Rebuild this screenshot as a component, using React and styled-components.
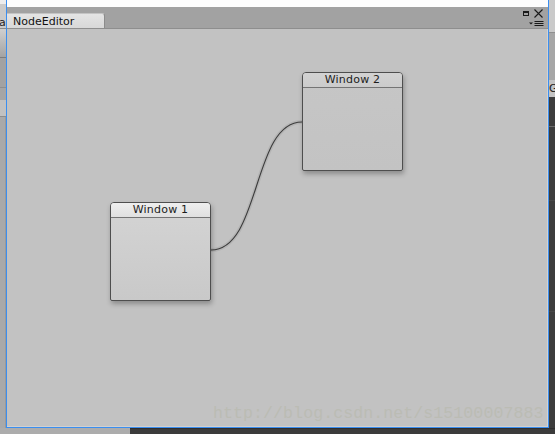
import React from "react";
import styled, { createGlobalStyle } from "styled-components";

const GlobalStyle = createGlobalStyle`
  html, body {
    margin: 0;
    padding: 0;
    background: #3b3b3b;
  }
  #root {
    width: 555px;
    height: 434px;
  }
`;

const Screen = styled.div`
  width: 555px;
  height: 434px;
  display: flex;
  flex-direction: column;
  overflow: hidden;
  font-family: "DejaVu Sans", "Liberation Sans", sans-serif;
`;

const MainRow = styled.div`
  display: flex;
  height: 428px;
`;

const SideStrip = styled.div`
  width: 6px;
  flex-shrink: 0;
  display: flex;
  flex-direction: column;
  overflow: hidden;
`;

const StripBlock = styled.div`
  height: ${(p) => (p.$h ? p.$h + "px" : "auto")};
  flex: ${(p) => (p.$h ? "none" : 1)};
  background: ${(p) => p.$bg};
  box-sizing: border-box;
  border-bottom: ${(p) => (p.$line ? `1px solid ${p.$line}` : "none")};
  box-shadow: ${(p) => p.$inset || "none"};
  font-size: 11px;
  line-height: ${(p) => p.$lh || 11}px;
  padding-top: ${(p) => p.$pt || 0}px;
  text-indent: ${(p) => p.$indent || 0}px;
  color: #1e1e1e;
  white-space: nowrap;
  overflow: hidden;
`;

const EditorWindow = styled.div`
  width: 543px;
  flex-shrink: 0;
  box-sizing: border-box;
  display: flex;
  flex-direction: column;
  border-left: 1px solid #3a8ef0;
  border-right: 1px solid #3a8ef0;
  border-bottom: 1px solid #3a8ef0;
`;

const TopBand = styled.div`
  height: 7px;
  background: #fdfdfd;
`;

const TitleBar = styled.div`
  height: 21px;
  background: #a2a2a2;
  display: flex;
  justify-content: space-between;
  align-items: flex-end;
`;

const Tab = styled.div`
  width: 98px;
  height: 15px;
  box-sizing: border-box;
  padding-left: 6px;
  background: linear-gradient(#e4e4e4, #d8d8d8);
  border-right: 1px solid #8c8c8c;
  border-top: 1px solid #c4c4c4;
  border-radius: 0 3px 0 0;
  font-size: 11px;
  line-height: 15px;
  color: #111;
`;

const Controls = styled.div`
  align-self: stretch;
  display: flex;
  flex-direction: column;
  align-items: flex-end;
  padding: 2px 5px 0 0;
`;

const ControlRow = styled.div`
  display: flex;
  align-items: center;
  gap: ${(p) => p.$gap}px;
  height: ${(p) => p.$h}px;
  margin-top: ${(p) => p.$mt || 0}px;
  margin-right: ${(p) => p.$mr || 0}px;
`;

const Canvas = styled.div`
  flex: 1;
  position: relative;
  background: #c2c2c2;
  border-top: 1px solid #8e8e8e;
  box-shadow: inset -1px 0 #d2d2d2, inset 0 -1px #d0d0d0;
`;

const CurveLayer = styled.svg`
  position: absolute;
  left: 0;
  top: 0;
  width: 100%;
  height: 100%;
`;

const NodeWindow = styled.div`
  position: absolute;
  left: ${(p) => p.$x}px;
  top: ${(p) => p.$y}px;
  width: 101px;
  height: 99px;
  box-sizing: border-box;
  display: flex;
  flex-direction: column;
  border: 1px solid #4e4e4e;
  border-radius: 4px 4px 2px 2px;
  box-shadow: 1px 3px 5px rgba(0, 0, 0, 0.28);
  background: ${(p) =>
    p.$active
      ? "linear-gradient(#d4d4d4, #c9c9c9)"
      : "linear-gradient(#c6c6c6, #c3c3c3)"};
`;

const NodeHeader = styled.div`
  height: 14px;
  border-bottom: 1px solid #747474;
  border-radius: 3px 3px 0 0;
  background: ${(p) =>
    p.$active
      ? "linear-gradient(#eeeeee, #e0e0e0)"
      : "linear-gradient(#d2d2d2, #cbcbcb)"};
  text-align: center;
  font-size: 11px;
  line-height: 14px;
  letter-spacing: 0.2px;
  color: #1c1c1c;
`;

const Watermark = styled.div`
  position: absolute;
  left: 206px;
  top: 377px;
  font-family: "Liberation Mono", monospace;
  font-size: 16.7px;
  line-height: 1;
  color: #bbbcb4;
  white-space: nowrap;
`;

const BottomStrip = styled.div`
  height: 6px;
  display: flex;
`;

const BottomPart = styled.div`
  width: ${(p) => (p.$w ? p.$w + "px" : "auto")};
  flex: ${(p) => (p.$w ? "none" : 1)};
  background: ${(p) => p.$bg};
  box-shadow: ${(p) => p.$inset || "none"};
`;

function MaximizeIcon() {
  return (
    <svg width="6" height="5" viewBox="0 0 6 5">
      <rect x="0.5" y="0.5" width="5" height="4" fill="none" stroke="#1a1a1a" />
      <rect x="0" y="0" width="6" height="2" fill="#1a1a1a" />
    </svg>
  );
}

function CloseIcon() {
  return (
    <svg width="9" height="9" viewBox="0 0 9 9">
      <path d="M0.5 0.5 L8.5 8.5 M8.5 0.5 L0.5 8.5" stroke="#1a1a1a" strokeWidth="1.1" />
    </svg>
  );
}

function MenuIcon() {
  return (
    <svg width="15" height="6" viewBox="0 0 15 6">
      <path d="M0 1.5 H4 L2 3.5 Z" fill="#1a1a1a" />
      <path d="M5.5 0.5 H14.5 M5.5 2.5 H14.5 M5.5 4.5 H14.5" stroke="#1a1a1a" strokeWidth="1" />
    </svg>
  );
}

const nodes = [
  { id: 1, title: "Window 1", x: 103, y: 173, active: true },
  { id: 2, title: "Window 2", x: 295, y: 43, active: false },
];

export default function App() {
  // curve runs from the right edge of Window 1 to the left edge of Window 2
  const start = { x: 204, y: 221 };
  const end = { x: 295, y: 93 };
  const d = `M${start.x} ${start.y} C${start.x + 50} ${start.y}, ${end.x - 50} ${end.y}, ${end.x} ${end.y}`;

  return (
    <>
      <GlobalStyle />
      <Screen>
        <MainRow>
          <SideStrip>
            <StripBlock $h={4} $bg="#ededed" />
            <StripBlock $h={24} $bg="#cacaca" $pt={13} $indent={-1}>
              a
            </StripBlock>
            <StripBlock $h={1} $bg="#8a8a8a" />
            <StripBlock $h={29} $bg="linear-gradient(#cfcfcf, #a3a3a3)" $line="#7c7c7c" />
            <StripBlock $h={30} $bg="#a2a2a2" $line="#8e8e8e" />
            <StripBlock $h={12} $bg="#a5a5a5" />
            <StripBlock $h={17} $bg="#c1c1c1" $line="#8c8c8c" />
            <StripBlock $bg="#a9a9a9" $inset="inset -1px 0 #9a9a9a" />
          </SideStrip>

          <EditorWindow>
            <TopBand />
            <TitleBar>
              <Tab>NodeEditor</Tab>
              <Controls>
                <ControlRow $gap={5} $h={9}>
                  <MaximizeIcon />
                  <CloseIcon />
                </ControlRow>
                <ControlRow $gap={0} $h={6} $mt={3} $mr={-1}>
                  <MenuIcon />
                </ControlRow>
              </Controls>
            </TitleBar>
            <Canvas>
              <CurveLayer>
                <path d={d} fill="none" stroke="rgba(0,0,0,0.07)" strokeWidth="4" />
                <path d={d} fill="none" stroke="#3c3c3c" strokeWidth="1.1" />
              </CurveLayer>
              {nodes.map((n) => (
                <NodeWindow key={n.id} $x={n.x} $y={n.y} $active={n.active}>
                  <NodeHeader $active={n.active}>{n.title}</NodeHeader>
                </NodeWindow>
              ))}
              <Watermark>http://blog.csdn.net/s15100007883</Watermark>
            </Canvas>
          </EditorWindow>

          <SideStrip>
            <StripBlock $h={32} $bg="#cacaca" />
            <StripBlock $h={1} $bg="#8f8f8f" />
            <StripBlock $h={47} $bg="#a6a6a6" />
            <StripBlock $h={17} $bg="#c3c3c3" $pt={2} $lh={13}>
              Gi
            </StripBlock>
            <StripBlock $h={30} $bg="#3c3c3c" $line="#6a6a6a" />
            <StripBlock $h={74} $bg="#3c3c3c" $line="#474747" />
            <StripBlock $h={111} $bg="#3c3c3c" $line="#474747" />
            <StripBlock $bg="#3c3c3c" />
          </SideStrip>
        </MainRow>

        <BottomStrip>
          <BottomPart $w={130} $bg="#acacac" />
          <BottomPart $bg="#3b3b3b" $inset="inset 0 1px #2e2e2e" />
        </BottomStrip>
      </Screen>
    </>
  );
}
